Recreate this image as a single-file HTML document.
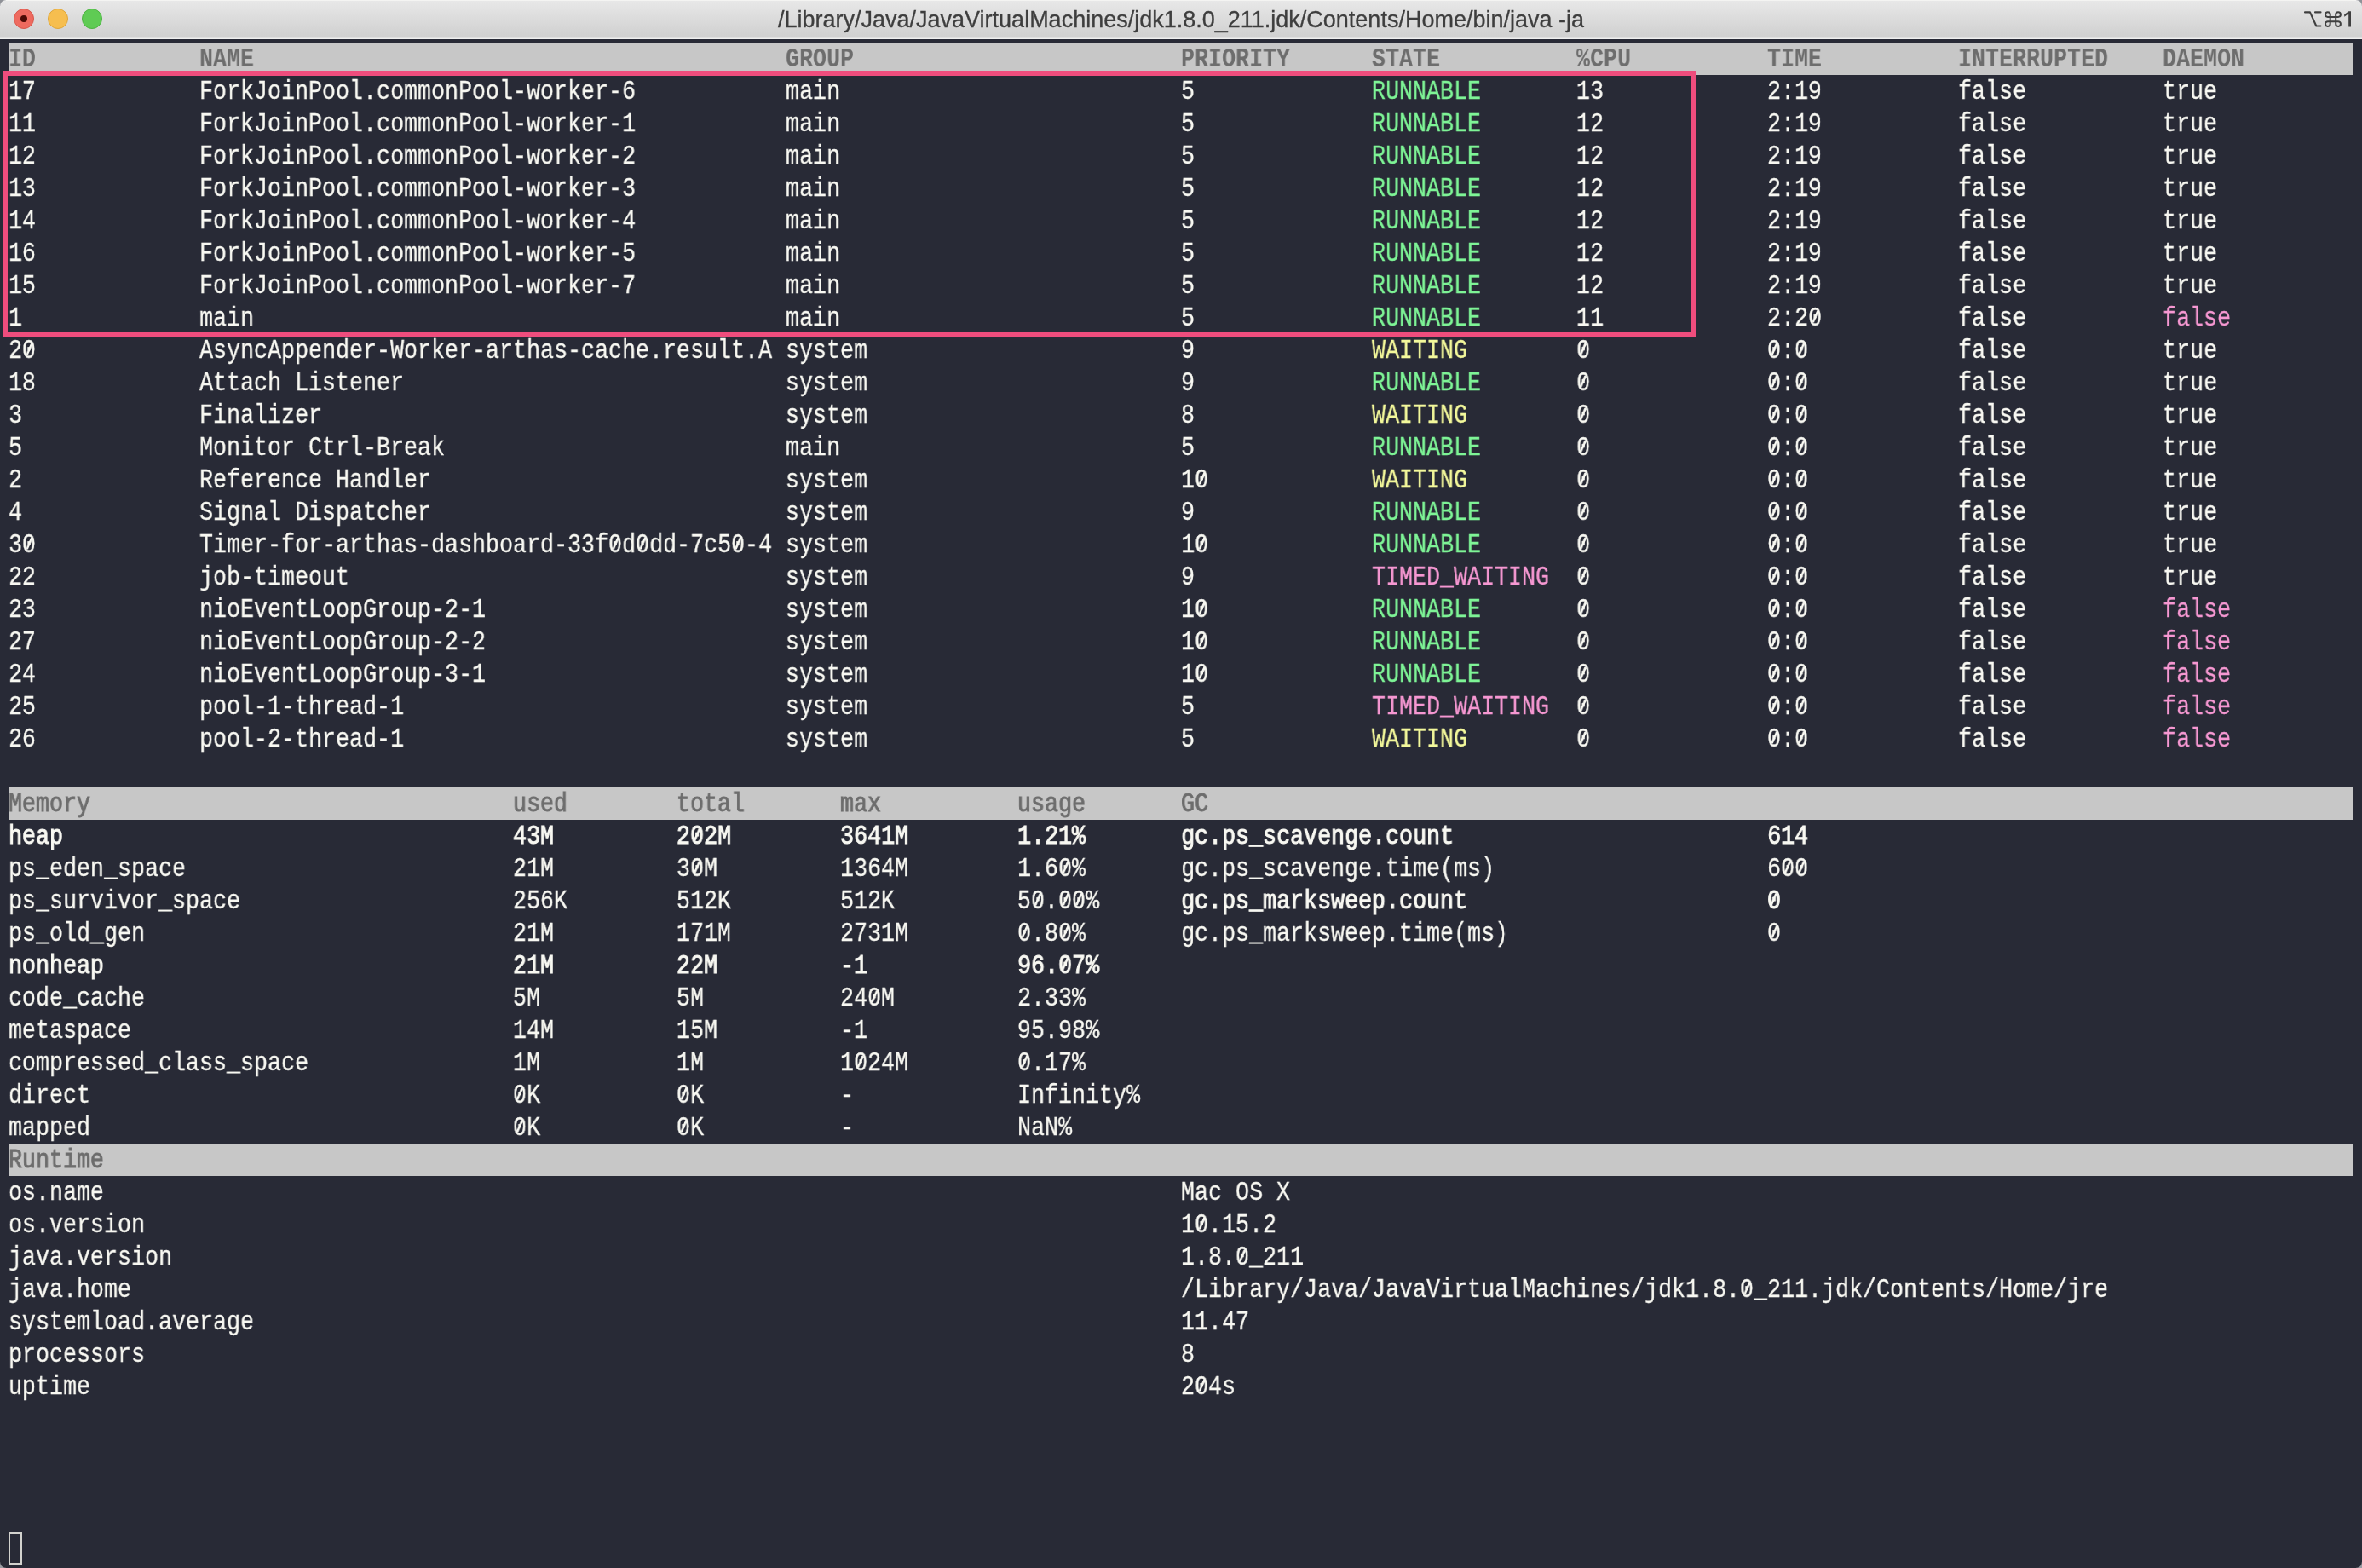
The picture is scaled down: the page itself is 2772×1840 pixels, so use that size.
<!DOCTYPE html>
<html><head><meta charset="utf-8"><title>terminal</title>
<style>
html,body{margin:0;padding:0;}
body{width:2772px;height:1840px;background:#282a36;overflow:hidden;position:relative;font-family:"Liberation Mono",monospace;}
#tb{position:absolute;left:0;top:0;width:2772px;height:46px;background:linear-gradient(#e9e9e9 0,#e7e7e7 2px,#d0d0d0 43px,#cecece 44px,#f0f0f0 45px,#eeeeee 46px);}
#tb .hl{position:absolute;left:0;top:0;width:100%;height:1px;background:#f4f4f2;}
.tl{position:absolute;top:10px;width:24px;height:24px;border-radius:50%;box-sizing:border-box;}
#title{position:absolute;left:0;top:0;width:2772px;height:46px;line-height:46px;text-align:center;font-family:"Liberation Sans",sans-serif;font-size:27px;color:#3e3e3e;white-space:pre;will-change:transform;-webkit-text-stroke:0.3px;}
.bar{position:absolute;left:10px;width:2752px;height:38px;background:#c7c7c7;}
.r{position:absolute;left:10px;height:38px;line-height:38px;font-size:31.0px;white-space:pre;color:#f8f8f2;transform-origin:0 0;transform:scaleX(0.86008);will-change:transform;-webkit-text-stroke:0.3px;}
.h{color:#6d6d6d;-webkit-text-stroke:0.9px;}
.hb{-webkit-text-stroke:0;}
.b{-webkit-text-stroke:1.05px;}
.hb{font-weight:bold;}
.b{font-weight:normal;}
i{font-style:normal;position:relative;}
i::after{content:"";position:absolute;left:50%;top:44.5%;width:2.5px;height:15px;margin:-7.5px 0 0 -1.25px;background:currentColor;transform:rotate(27deg);border-radius:1px;}
.b i::after{width:3.4px;margin-left:-1.7px;}
.g{color:#7ef496;}
.y{color:#f3f89b;}
.m{color:#f698d2;}
#hl{position:absolute;left:3px;top:83px;width:1987px;height:313px;box-sizing:border-box;border:6px solid #ef4d7d;}
.cn{position:absolute;width:7px;height:7px;}
#cur{position:absolute;left:10px;top:1798px;width:16px;height:38px;box-sizing:border-box;border:2px solid #d2d2ce;}
</style></head><body>
<div id="tb"><div class="hl"></div></div>
<div class="tl" style="left:16px;background:#ee6a5f;border:1px solid #d8584c;"></div>
<div class="tl" style="left:56px;background:#f6be4f;border:1px solid #dfa63a;"></div>
<div class="tl" style="left:96px;background:#5fcb54;border:1px solid #4cb341;"></div>
<div style="position:absolute;left:24px;top:18px;width:8px;height:8px;border-radius:50%;background:#4d0a05;"></div>
<div id="title">/Library/Java/JavaVirtualMachines/jdk1.8.0_211.jdk/Contents/Home/bin/java -ja</div>
<svg style="position:absolute;left:2700px;top:8px" width="66" height="30" viewBox="0 0 66 30" fill="none" stroke="#3f3f3f" stroke-width="2.1" stroke-linecap="round" stroke-linejoin="round">
<path d="M5 6.4 H11 L18.3 22.5 H23.5 M17 6.4 H23.5"/>
<path stroke-width="2" d="M34.7 11.9 H41.2 V17.2 H34.7 Z M34.7 11.9 H31.85 A2.85 2.85 0 1 1 34.7 9.05 Z M41.2 11.9 V9.05 A2.85 2.85 0 1 1 44.05 11.9 Z M41.2 17.2 H44.05 A2.85 2.85 0 1 1 41.2 20.05 Z M34.7 17.2 V20.05 A2.85 2.85 0 1 1 31.85 17.2 Z"/>
<path fill="#3f3f3f" stroke="none" d="M59 5.3 H56.4 L51.2 9 V11.7 L56.2 8.3 V23.5 H59 Z"/>
</svg>
<div class="bar" style="top:50px"></div>
<div class="bar" style="top:924px"></div>
<div class="bar" style="top:1342px"></div>
<div class="r h hb" style="top:51px">ID            NAME                                       GROUP                        PRIORITY      STATE          %CPU          TIME          INTERRUPTED    DAEMON</div>
<div class="r" style="top:89px">17            ForkJoinPool.commonPool-worker-6           main                         5             <span class="g">RUNNABLE</span>       13            2:19          false          true</div>
<div class="r" style="top:127px">11            ForkJoinPool.commonPool-worker-1           main                         5             <span class="g">RUNNABLE</span>       12            2:19          false          true</div>
<div class="r" style="top:165px">12            ForkJoinPool.commonPool-worker-2           main                         5             <span class="g">RUNNABLE</span>       12            2:19          false          true</div>
<div class="r" style="top:203px">13            ForkJoinPool.commonPool-worker-3           main                         5             <span class="g">RUNNABLE</span>       12            2:19          false          true</div>
<div class="r" style="top:241px">14            ForkJoinPool.commonPool-worker-4           main                         5             <span class="g">RUNNABLE</span>       12            2:19          false          true</div>
<div class="r" style="top:279px">16            ForkJoinPool.commonPool-worker-5           main                         5             <span class="g">RUNNABLE</span>       12            2:19          false          true</div>
<div class="r" style="top:317px">15            ForkJoinPool.commonPool-worker-7           main                         5             <span class="g">RUNNABLE</span>       12            2:19          false          true</div>
<div class="r" style="top:355px">1             main                                       main                         5             <span class="g">RUNNABLE</span>       11            2:2<i>0</i>          false          <span class="m">false</span></div>
<div class="r" style="top:393px">2<i>0</i>            AsyncAppender-Worker-arthas-cache.result.A system                       9             <span class="y">WAITING</span>        <i>0</i>             <i>0</i>:<i>0</i>           false          true</div>
<div class="r" style="top:431px">18            Attach Listener                            system                       9             <span class="g">RUNNABLE</span>       <i>0</i>             <i>0</i>:<i>0</i>           false          true</div>
<div class="r" style="top:469px">3             Finalizer                                  system                       8             <span class="y">WAITING</span>        <i>0</i>             <i>0</i>:<i>0</i>           false          true</div>
<div class="r" style="top:507px">5             Monitor Ctrl-Break                         main                         5             <span class="g">RUNNABLE</span>       <i>0</i>             <i>0</i>:<i>0</i>           false          true</div>
<div class="r" style="top:545px">2             Reference Handler                          system                       1<i>0</i>            <span class="y">WAITING</span>        <i>0</i>             <i>0</i>:<i>0</i>           false          true</div>
<div class="r" style="top:583px">4             Signal Dispatcher                          system                       9             <span class="g">RUNNABLE</span>       <i>0</i>             <i>0</i>:<i>0</i>           false          true</div>
<div class="r" style="top:621px">3<i>0</i>            Timer-for-arthas-dashboard-33f<i>0</i>d<i>0</i>dd-7c5<i>0</i>-4 system                       1<i>0</i>            <span class="g">RUNNABLE</span>       <i>0</i>             <i>0</i>:<i>0</i>           false          true</div>
<div class="r" style="top:659px">22            job-timeout                                system                       9             <span class="m">TIMED_WAITING</span>  <i>0</i>             <i>0</i>:<i>0</i>           false          true</div>
<div class="r" style="top:697px">23            nioEventLoopGroup-2-1                      system                       1<i>0</i>            <span class="g">RUNNABLE</span>       <i>0</i>             <i>0</i>:<i>0</i>           false          <span class="m">false</span></div>
<div class="r" style="top:735px">27            nioEventLoopGroup-2-2                      system                       1<i>0</i>            <span class="g">RUNNABLE</span>       <i>0</i>             <i>0</i>:<i>0</i>           false          <span class="m">false</span></div>
<div class="r" style="top:773px">24            nioEventLoopGroup-3-1                      system                       1<i>0</i>            <span class="g">RUNNABLE</span>       <i>0</i>             <i>0</i>:<i>0</i>           false          <span class="m">false</span></div>
<div class="r" style="top:811px">25            pool-1-thread-1                            system                       5             <span class="m">TIMED_WAITING</span>  <i>0</i>             <i>0</i>:<i>0</i>           false          <span class="m">false</span></div>
<div class="r" style="top:849px">26            pool-2-thread-1                            system                       5             <span class="y">WAITING</span>        <i>0</i>             <i>0</i>:<i>0</i>           false          <span class="m">false</span></div>
<div class="r h" style="top:925px">Memory                               used        total       max          usage       GC</div>
<div class="r" style="top:963px"><span class="b">heap</span>                                 <span class="b">43M</span>         <span class="b">2<i>0</i>2M</span>        <span class="b">3641M</span>        <span class="b">1.21%</span>       <span class="b">gc.ps_scavenge.count</span>                       <span class="b">614</span></div>
<div class="r" style="top:1001px">ps_eden_space                        21M         3<i>0</i>M         1364M        1.6<i>0</i>%       gc.ps_scavenge.time(ms)                    6<i>0</i><i>0</i></div>
<div class="r" style="top:1039px">ps_survivor_space                    256K        512K        512K         5<i>0</i>.<i>0</i><i>0</i>%      <span class="b">gc.ps_marksweep.count</span>                      <span class="b"><i>0</i></span></div>
<div class="r" style="top:1077px">ps_old_gen                           21M         171M        2731M        <i>0</i>.8<i>0</i>%       gc.ps_marksweep.time(ms)                   <i>0</i></div>
<div class="r" style="top:1115px"><span class="b">nonheap</span>                              <span class="b">21M</span>         <span class="b">22M</span>         <span class="b">-1</span>           <span class="b">96.<i>0</i>7%</span></div>
<div class="r" style="top:1153px">code_cache                           5M          5M          24<i>0</i>M         2.33%</div>
<div class="r" style="top:1191px">metaspace                            14M         15M         -1           95.98%</div>
<div class="r" style="top:1229px">compressed_class_space               1M          1M          1<i>0</i>24M        <i>0</i>.17%</div>
<div class="r" style="top:1267px">direct                               <i>0</i>K          <i>0</i>K          -            Infinity%</div>
<div class="r" style="top:1305px">mapped                               <i>0</i>K          <i>0</i>K          -            NaN%</div>
<div class="r h" style="top:1343px">Runtime</div>
<div class="r" style="top:1381px">os.name                                                                               Mac OS X</div>
<div class="r" style="top:1419px">os.version                                                                            1<i>0</i>.15.2</div>
<div class="r" style="top:1457px">java.version                                                                          1.8.<i>0</i>_211</div>
<div class="r" style="top:1495px">java.home                                                                             /Library/Java/JavaVirtualMachines/jdk1.8.<i>0</i>_211.jdk/Contents/Home/jre</div>
<div class="r" style="top:1533px">systemload.average                                                                    11.47</div>
<div class="r" style="top:1571px">processors                                                                            8</div>
<div class="r" style="top:1609px">uptime                                                                                2<i>0</i>4s</div>
<div class="cn" style="left:0;top:0;background:radial-gradient(circle at 100% 100%,rgba(143,145,151,0) 6.3px,#8f9197 7.3px)"></div>
<div class="cn" style="left:2765px;top:0;background:radial-gradient(circle at 0 100%,rgba(143,145,151,0) 6.3px,#8f9197 7.3px)"></div>
<div class="cn" style="left:0;top:1833px;background:radial-gradient(circle at 100% 0,rgba(154,156,162,0) 6.3px,#9a9ca2 7.3px)"></div>
<div class="cn" style="left:2765px;top:1833px;background:radial-gradient(circle at 0 0,rgba(154,156,162,0) 6.3px,#9a9ca2 7.3px)"></div>
<div id="hl"></div>
<div id="cur"></div>
</body></html>
